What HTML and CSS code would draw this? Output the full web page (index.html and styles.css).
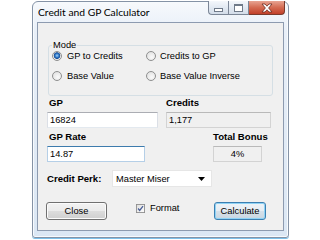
FILE: index.html
```html
<!DOCTYPE html>
<html>
	<head>
		<meta charset="utf-8" />
		<title>Credit and GP Calculator</title>
		<link rel="stylesheet" href="styles.css">
	</head>
	<body>
		<div class="window">
			<div class="titlebar">
				<span class="title">Credit and GP Calculator</span>
				<div class="caption">
					<span class="cbtn min"><span class="glyph-min"></span></span>
					<span class="cbtn max"><span class="glyph-max"></span></span>
					<span class="cbtn close">
						<svg width="14" height="10" viewBox="0 0 14 10">
							<path d="M2 1h3l2 2.2L9 1h3L8.6 5 12 9H9L7 6.8 5 9H2l3.4-4z" fill="#fff" stroke="#6b2a20" stroke-width="0.8" stroke-linejoin="round"/>
						</svg>
					</span>
				</div>
			</div>
			<div class="client">
				<fieldset class="group">
					<legend>Mode</legend>
					<div class="radios">
						<label class="opt"><input type="radio" name="mode" checked><span>GP to Credits</span></label>
						<label class="opt"><input type="radio" name="mode"><span>Credits to GP</span></label>
						<label class="opt"><input type="radio" name="mode"><span>Base Value</span></label>
						<label class="opt"><input type="radio" name="mode"><span>Base Value Inverse</span></label>
					</div>
				</fieldset>

				<div class="row labels1">
					<span class="lbl gp">GP</span>
					<span class="lbl credits">Credits</span>
				</div>
				<div class="row fields1">
					<div class="box gpbox">16824</div>
					<div class="box ro creditsbox">1,177</div>
				</div>
				<div class="row labels2">
					<span class="lbl gp">GP Rate</span>
					<span class="lbl bonus">Total Bonus</span>
				</div>
				<div class="row fields2">
					<div class="box focus ratebox">14.87</div>
					<div class="box ro bonusbox">4%</div>
				</div>
				<div class="row perk">
					<span class="lbl">Credit Perk:</span>
					<div class="combo">
						<span>Master Miser</span>
						<svg width="7" height="4" viewBox="0 0 7 4"><path d="M0 0h7L3.5 4z" fill="#000"/></svg>
					</div>
				</div>
				<div class="row buttons">
					<span class="btn closebtn">Close</span>
					<label class="check">
						<svg width="10" height="10" viewBox="0 0 10 10">
							<defs>
								<linearGradient id="cb" x1="0" y1="0" x2="1" y2="1">
									<stop offset="0" stop-color="#dcdcdc"/>
									<stop offset="1" stop-color="#ffffff"/>
								</linearGradient>
							</defs>
							<rect x="0.5" y="0.5" width="9" height="9" fill="url(#cb)" stroke="#8f8f8f"/>
							<path d="M2.3 5l1.8 2.2L7.8 2.4" fill="none" stroke="#4a5f97" stroke-width="1.4"/>
						</svg>
						<span>Format</span>
					</label>
					<span class="btn default">Calculate</span>
				</div>
			</div>
		</div>
	</body>
</html>
```

FILE: styles.css
```css
*{
	margin: 0;
	padding: 0;
	box-sizing: border-box;
}
body{
	width: 320px;
	height: 240px;
	overflow: hidden;
	background: #fff;
	font-family: "Liberation Sans", Arial, sans-serif;
	font-size: 9.3px;
	color: #000;
}
.window{
	margin: 1px 0 0 32px;
	width: 257px;
	height: 237px;
	border: 1px solid #8593a6;
	border-radius: 6px 6px 3px 3px;
	background: linear-gradient(#f7f9fc, #e8eff8 30px, #dbe7f4);
	box-shadow: inset 0 0 0 1px #f7fafd, 0 1px 0 #7cc0ea;
	display: flex;
	flex-direction: column;
	padding-bottom: 6px;
}
.titlebar{
	height: 20px;
	display: flex;
	padding-left: 5px;
}
.title{
	font-family: Lato, "Open Sans", sans-serif;
	font-size: 10.3px;
	line-height: 21px;
	color: #000;
}
.caption{
	margin-left: auto;
	margin-right: 3px;
	margin-top: -1px;
	display: flex;
	height: 14px;
}
.cbtn{
	display: flex;
	align-items: center;
	justify-content: center;
	height: 14px;
	border: 1px solid #7b8696;
	border-top: none;
}
.min{
	width: 20px;
	border-radius: 0 0 0 4px;
	border-right: none;
	background: linear-gradient(#f4f7fb, #e2e9f2 50%, #d3dde9);
}
.max{
	width: 21px;
	background: linear-gradient(#f4f7fb, #e2e9f2 50%, #d3dde9);
}
.close{
	width: 36px;
	border-left: none;
	border-radius: 0 0 4px 0;
	border-color: #7a3a2c;
	background: linear-gradient(#e8a492, #d46b52 50%, #c2412a);
}
.glyph-min{
	width: 9px;
	height: 4px;
	margin-top: 5px;
	border: 1px solid #6f7a89;
	background: #fff;
}
.glyph-max{
	width: 9px;
	height: 8px;
	border: 1px solid #6f7a89;
	border-top-width: 2px;
	background: #fff;
}
.client{
	margin: 0 4px;
	flex: 1;
	border: 1px solid #8d9bb0;
	background: #f0f0f0;
	display: flex;
	flex-direction: column;
}
.group{
	margin: 16px 0 0 10px;
	width: 225px;
	height: 57px;
	border: 1px solid #d5dfe5;
	border-radius: 3px;
	padding: 0 0 0 3px;
}
.group legend{
	padding: 0 1px;
	line-height: 12px;
}
.radios{
	display: grid;
	grid-template-columns: 94px auto;
	row-gap: 10px;
}
.opt{
	display: flex;
	align-items: center;
	height: 10px;
	gap: 5px;
	white-space: nowrap;
}
.opt:nth-child(even){
	gap: 4px;
}
.opt input{
	appearance: none;
	width: 10px;
	height: 10px;
	border-radius: 50%;
	border: 1px solid #8e8f8f;
	background: radial-gradient(circle at 60% 65%, #fafafa, #dcdcdc);
}
.opt input:checked{
	background: radial-gradient(circle at 50% 45%, #9fd2f7 0, #2b73c4 2px, #1b4f95 3px, #e8e8e8 3.6px, #f6f6f6);
}
.row{
	display: flex;
}
.lbl{
	font-size: 9.6px;
	font-weight: bold;
	line-height: 12px;
	white-space: nowrap;
}
.labels1{
	margin-top: 1px;
}
.labels1 .gp,
.labels2 .gp{
	margin-left: 11px;
	width: 117px;
}
.labels2 .gp{
	width: 164px;
}
.fields1,
.fields2{
	margin-top: 3px;
	height: 16px;
}
.labels2{
	margin-top: 3px;
}
.box{
	height: 16px;
	line-height: 14px;
	padding-left: 2px;
	background: #fff;
	border: 1px solid #dbdfe6;
	border-top-color: #abadb3;
	border-bottom-color: #e3e9ef;
}
.gpbox{
	margin-left: 9px;
	width: 111px;
}
.creditsbox{
	margin-left: 8px;
	width: 105px;
}
.ro{
	background: #f0f0f0;
	border-color: #d3d3d3;
	border-top-color: #b9b9b9;
}
.focus{
	border-color: #b5cfe7;
	border-top-color: #3d7bad;
}
.ratebox{
	margin-left: 9px;
	width: 98px;
}
.bonusbox{
	margin-left: 68px;
	width: 49px;
	padding-left: 0;
	text-align: center;
}
.perk{
	margin-top: 8px;
	height: 17px;
	align-items: center;
}
.perk .lbl{
	margin-left: 9px;
	width: 65px;
}
.combo{
	width: 100px;
	height: 17px;
	background: #fff;
	border: 1px solid #e6e6e6;
	display: flex;
	align-items: center;
	justify-content: space-between;
	padding: 0 6px 0 3px;
}
.buttons{
	margin-top: 15px;
	height: 18px;
}
.btn{
	height: 18px;
	line-height: 16px;
	text-align: center;
	border: 1px solid #707070;
	border-radius: 3px;
	background: linear-gradient(#f2f2f2, #ebebeb 50%, #dddddd 50%, #cfcfcf);
	box-shadow: inset 0 0 0 1px #fbfbfb;
}
.closebtn{
	margin-left: 8px;
	width: 61px;
}
.check{
	margin-left: 29px;
	margin-top: 1px;
	display: flex;
	align-items: center;
	gap: 5px;
	height: 10px;
}
.check svg{
	flex: none;
	width: 9px;
	height: 9px;
}
.default{
	margin-left: auto;
	margin-right: 17px;
	width: 52px;
	border-color: #3c7fb1;
	box-shadow: inset 0 0 0 1px #8fd3f5;
	background: linear-gradient(#eef3f7, #e6edf3 50%, #d6e1ea 50%, #c9d6e1);
}
```
